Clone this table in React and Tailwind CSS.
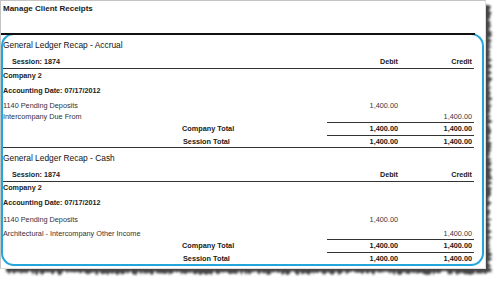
import React from "react";

function rnd(i) {
  const v = Math.sin(i * 12.9898 + 78.233) * 43758.5453;
  return v - Math.floor(v);
}

function TornShadow() {
  const pts = [];
  pts.push([478, 5]);
  let k = 0;
  for (let y = 5; y <= 273; y += 1.5) {
    pts.push([490 + (rnd(k++) - 0.5) * 4.5, y]);
  }
  for (let x = 492; x >= 6; x -= 1.5) {
    pts.push([x, 273 + (rnd(k++) - 0.5) * 4.5]);
  }
  pts.push([6, 262]);
  const d = "M" + pts.map((p) => p[0].toFixed(1) + " " + p[1].toFixed(1)).join(" L") + " Z";
  return (
    <svg className="absolute left-0 top-0 z-0" width="500" height="282">
      <defs>
        <filter id="bl" x="-5%" y="-5%" width="110%" height="110%">
          <feGaussianBlur stdDeviation="0.8" />
        </filter>
      </defs>
      <path d={d} fill="#444444" filter="url(#bl)" />
    </svg>
  );
}

function Cols({ debit, credit, bold }) {
  const w = bold ? "font-bold text-[#1a1a1a]" : "text-[#3a3842]";
  return (
    <>
      <div className={"w-[73px] pr-[2px] text-right " + w}>{debit}</div>
      <div className={"w-[74px] pr-[2px] text-right " + w}>{credit}</div>
    </>
  );
}

function LineSeg() {
  return (
    <div className="flex h-[1px]">
      <div className="w-[324px]" />
      <div className="w-[147px] bg-[#333]" />
    </div>
  );
}

function Section({ title, account2, last, companyH, dateH, acct1H, acct2H }) {
  return (
    <div className={last ? "" : "border-b border-[#333]"}>
      <div className="h-[21px] flex items-center text-[8.4px] text-[#111]">
        {title}
      </div>
      <div className="h-[13px] flex items-center border-b border-[#333] text-[7.2px] font-bold text-[#1a1a1a]">
        <div className="w-[324px] pl-[9px]">Session: 1874</div>
        <Cols debit="Debit" credit="Credit" bold />
      </div>
      <div className={"flex items-center text-[7.2px] font-bold text-[#1a1a1a] " + companyH}>
        Company 2
      </div>
      <div className={"flex items-center text-[7.2px] font-bold text-[#1a1a1a] " + dateH}>
        Accounting Date: 07/17/2012
      </div>
      <div className={"flex items-center text-[7.3px] " + acct1H}>
        <div className="w-[324px] text-[#33303a]">1140 Pending Deposits</div>
        <Cols debit="1,400.00" credit="" />
      </div>
      <div className={"flex items-center text-[7.3px] " + acct2H}>
        <div className="w-[324px] text-[#33303a]">{account2}</div>
        <Cols debit="" credit="1,400.00" />
      </div>
      <LineSeg />
      <div className="h-[12px] flex items-center text-[7.3px]">
        <div className="w-[324px] pl-[179px] font-bold text-[#1a1a1a]">Company Total</div>
        <Cols debit="1,400.00" credit="1,400.00" bold />
      </div>
      <LineSeg />
      <div className={"flex items-center text-[7.3px] " + (last ? "h-[12px]" : "h-[11px]")}>
        <div className="w-[324px] pl-[180px] font-bold text-[#1a1a1a]">Session Total</div>
        <Cols debit="1,400.00" credit="1,400.00" bold />
      </div>
    </div>
  );
}

export default function App() {
  return (
    <div className="relative w-[500px] h-[282px] bg-white overflow-hidden font-['Liberation_Sans',Arial,sans-serif]">
      <TornShadow />
      <div className="relative z-10 w-[486px] h-[269px] bg-white border-t border-l border-[#c4c4c4] border-r border-b border-r-[#dedede] border-b-[#dedede]">
        <div className="relative z-10 w-[474px] h-[34px] border-b-2 border-[#111] pl-[2px] pt-[3px] text-[8px] leading-[10px] font-bold text-[#1a1a1a]">
          Manage Client Receipts
        </div>
        <div className="-mt-[2px] w-[483px] h-[233px] rounded-[13px] border-2 border-[#22a6de]">
          <div className="w-[471px] leading-none">
            <Section
              title="General Ledger Recap - Accrual"
              account2="Intercompany Due From"
              companyH="h-[13px]"
              dateH="h-[18px]"
              acct1H="h-[11px]"
              acct2H="h-[11px]"
            />
            <Section
              title="General Ledger Recap - Cash"
              account2="Architectural - Intercompany Other Income"
              last
              companyH="h-[12px]"
              dateH="h-[18px]"
              acct1H="h-[16px]"
              acct2H="h-[11px]"
            />
          </div>
        </div>
      </div>
    </div>
  );
}
